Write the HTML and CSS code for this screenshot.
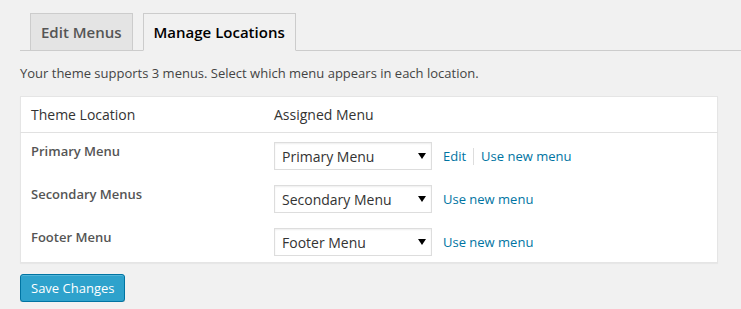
FILE: index.html
```html
<!DOCTYPE html>
<html lang="en">
<head>
    <meta charset="UTF-8">
    <meta name="viewport" content="width=device-width, initial-scale=1.0">
    <title>Menus - Manage Locations</title>
    <link rel="stylesheet" href="styles.css">
</head>
<body>
    <div class="wrap">
        <div class="nav-tabs">
            <a href="#" class="nav-tab">Edit Menus</a>
            <a href="#" class="nav-tab nav-tab-active">Manage Locations</a>
        </div>

        <p class="intro">Your theme supports 3 menus. Select which menu appears in each location.</p>

        <table class="locations">
            <thead>
                <tr>
                    <th class="col-location">Theme Location</th>
                    <th>Assigned Menu</th>
                </tr>
            </thead>
            <tbody>
                <tr>
                    <td class="col-location">Primary Menu</td>
                    <td>
                        <div class="menu-cell">
                            <div class="select-wrap">
                                <select>
                                    <option>Primary Menu</option>
                                    <option>Secondary Menu</option>
                                    <option>Footer Menu</option>
                                </select>
                                <svg class="arrow" width="8" height="6" viewBox="0 0 8 6"><path d="M0 0H8L4 6Z" fill="#000"/></svg>
                            </div>
                            <div class="links">
                                <a href="#">Edit</a>
                                <span class="sep"></span>
                                <a href="#">Use new menu</a>
                            </div>
                        </div>
                    </td>
                </tr>
                <tr>
                    <td class="col-location">Secondary Menus</td>
                    <td>
                        <div class="menu-cell">
                            <div class="select-wrap">
                                <select>
                                    <option>Secondary Menu</option>
                                    <option>Primary Menu</option>
                                    <option>Footer Menu</option>
                                </select>
                                <svg class="arrow" width="8" height="6" viewBox="0 0 8 6"><path d="M0 0H8L4 6Z" fill="#000"/></svg>
                            </div>
                            <div class="links">
                                <a href="#">Use new menu</a>
                            </div>
                        </div>
                    </td>
                </tr>
                <tr>
                    <td class="col-location">Footer Menu</td>
                    <td>
                        <div class="menu-cell">
                            <div class="select-wrap">
                                <select>
                                    <option>Footer Menu</option>
                                    <option>Primary Menu</option>
                                    <option>Secondary Menu</option>
                                </select>
                                <svg class="arrow" width="8" height="6" viewBox="0 0 8 6"><path d="M0 0H8L4 6Z" fill="#000"/></svg>
                            </div>
                            <div class="links">
                                <a href="#">Use new menu</a>
                            </div>
                        </div>
                    </td>
                </tr>
            </tbody>
        </table>

        <button class="button-primary">Save Changes</button>
    </div>
</body>
</html>
```

FILE: styles.css
```css
body, html {
    margin: 0;
    padding: 0;
    background: #f1f1f1;
    font-family: 'Open Sans', sans-serif;
    font-size: 13px;
    color: #444;
}
.wrap {
    padding: 13px 0 0 20px;
}
.nav-tabs {
    display: flex;
    gap: 10px;
    padding-left: 10px;
    border-bottom: 1px solid #ccc;
}
.nav-tab {
    display: block;
    padding: 6px 10px;
    line-height: 24px;
    font-size: 15px;
    font-weight: 600;
    color: #555;
    text-decoration: none;
    background: #e4e4e4;
    border: 1px solid #ccc;
    border-bottom: none;
}
.nav-tab-active {
    color: #000;
    background: #f1f1f1;
    border-bottom: 1px solid #f1f1f1;
    margin-bottom: -1px;
}
.intro {
    margin: 12px 0 13px;
    line-height: 20px;
}
.locations {
    width: calc(100% - 23px);
    table-layout: fixed;
    border-collapse: collapse;
    background: #fff;
    border: 1px solid #e5e5e5;
    box-shadow: 0 1px 1px rgba(0,0,0,0.04);
}
.locations th {
    text-align: left;
    font-weight: normal;
    font-size: 14px;
    line-height: 19px;
    color: #333;
    padding: 8px 10px;
    border-bottom: 1px solid #e1e1e1;
}
.locations td {
    vertical-align: top;
    padding: 9px 10px 6px;
}
.locations .col-location {
    width: 223px;
}
td.col-location {
    font-weight: 600;
    color: #555;
    line-height: 18px;
}
.menu-cell {
    display: flex;
    align-items: center;
}
.select-wrap {
    position: relative;
    width: 158px;
}
.select-wrap select {
    appearance: none;
    -webkit-appearance: none;
    width: 100%;
    height: 28px;
    margin: 0;
    padding: 0 20px 0 7px;
    font-family: 'Open Sans', sans-serif;
    font-size: 14px;
    color: #333;
    background: #fff;
    border: 1px solid #ddd;
    border-radius: 0;
    box-shadow: inset 0 1px 2px rgba(0,0,0,0.07);
}
.select-wrap .arrow {
    position: absolute;
    right: 6px;
    top: 11px;
    pointer-events: none;
}
.links {
    display: flex;
    align-items: center;
    margin-left: 11px;
}
.links a {
    color: #0074a2;
    text-decoration: none;
}
.sep {
    width: 1px;
    height: 17px;
    background: #ddd;
    margin: 0 7px;
}
.button-primary {
    margin-top: 11px;
    height: 28px;
    padding: 0 10px;
    font-family: 'Open Sans', sans-serif;
    font-size: 13px;
    color: #fff;
    background: #2ea2cc;
    border: 1px solid #0074a2;
    border-radius: 3px;
    box-shadow: inset 0 1px 0 rgba(120,200,230,0.5), 0 1px 0 rgba(0,0,0,0.15);
    cursor: pointer;
}
```
